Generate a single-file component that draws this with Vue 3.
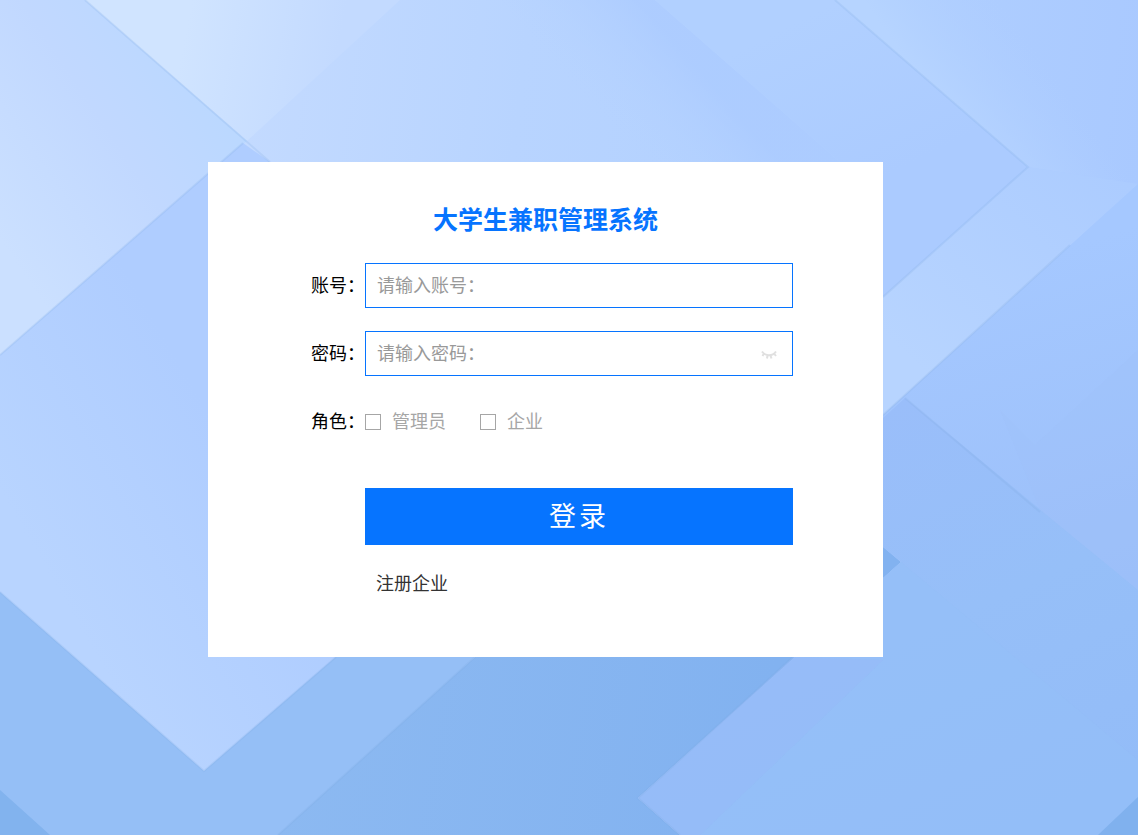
<script setup>
import { ref } from 'vue'

const account = ref('')
const password = ref('')
const showPassword = ref(false)
const role = ref('')
const roles = ['管理员', '企业']
</script>

<template>
  <main class="page">
    <svg class="backdrop" viewBox="0 0 1138 835" preserveAspectRatio="xMidYMid slice" aria-hidden="true">
      <defs>
        <linearGradient id="sky" gradientUnits="userSpaceOnUse" x1="250" y1="100" x2="1138" y2="200">
          <stop offset="0" stop-color="#c3daff" />
          <stop offset="0.3" stop-color="#b8d4ff" />
          <stop offset="0.65" stop-color="#b1d0ff" />
          <stop offset="1" stop-color="#a9c9ff" />
        </linearGradient>
        <linearGradient id="glow" gradientUnits="userSpaceOnUse" x1="180" y1="60" x2="330" y2="90">
          <stop offset="0" stop-color="#d0e4ff" />
          <stop offset="1" stop-color="#c3daff" />
        </linearGradient>
        <linearGradient id="left" gradientUnits="userSpaceOnUse" x1="0" y1="240" x2="210" y2="100">
          <stop offset="0" stop-color="#cbe0ff" />
          <stop offset="0.6" stop-color="#c1d8ff" />
          <stop offset="1" stop-color="#bbd8ff" />
        </linearGradient>
        <linearGradient id="mid" gradientUnits="userSpaceOnUse" x1="40" y1="560" x2="230" y2="450">
          <stop offset="0" stop-color="#b8d4ff" />
          <stop offset="1" stop-color="#afcdff" />
        </linearGradient>
        <linearGradient id="deep" gradientUnits="userSpaceOnUse" x1="300" y1="680" x2="760" y2="760">
          <stop offset="0" stop-color="#8cb9f1" />
          <stop offset="1" stop-color="#82b2f0" />
        </linearGradient>
        <linearGradient id="right" gradientUnits="userSpaceOnUse" x1="960" y1="280" x2="1060" y2="600">
          <stop offset="0" stop-color="#a5c8ff" />
          <stop offset="1" stop-color="#9bbff9" />
        </linearGradient>
        <linearGradient id="low" gradientUnits="userSpaceOnUse" x1="900" y1="400" x2="1080" y2="800">
          <stop offset="0" stop-color="#9abefa" />
          <stop offset="0.5" stop-color="#96bff8" />
          <stop offset="1" stop-color="#93bcf8" />
        </linearGradient>
        <linearGradient id="facet" gradientUnits="userSpaceOnUse" x1="760" y1="40" x2="840" y2="200">
          <stop offset="0" stop-color="#b1d0ff" />
          <stop offset="1" stop-color="#abcbff" />
        </linearGradient>
        <linearGradient id="band" gradientUnits="userSpaceOnUse" x1="900" y1="350" x2="1090" y2="150">
          <stop offset="0" stop-color="#b7d4ff" />
          <stop offset="1" stop-color="#acccff" />
        </linearGradient>
        <linearGradient id="dusk" gradientUnits="userSpaceOnUse" x1="690" y1="60" x2="610" y2="130">
          <stop offset="0" stop-color="#aacaff" stop-opacity="0.7" />
          <stop offset="1" stop-color="#b5d2ff" stop-opacity="0" />
        </linearGradient>
        <linearGradient id="ray" gradientUnits="userSpaceOnUse" x1="910" y1="65" x2="1000" y2="0">
          <stop offset="0" stop-color="#b6d4ff" />
          <stop offset="1" stop-color="#afceff" stop-opacity="0" />
        </linearGradient>
      </defs>
      <rect width="1138" height="835" fill="url(#sky)" />
      <path d="M85 0H400L247 141Z" fill="url(#glow)" />
      <path d="M655 0L840 162H500V0Z" fill="url(#dusk)" />
      <path d="M655 0H835L1028 167 883 297V200L840 162Z" fill="url(#facet)" />
      <path d="M835 0H1138V184L1028 167Z" fill="url(#ray)" />
      <path d="M1028 167L883 297V415L1138 184Z" fill="url(#band)" />
      <path d="M0 0H85L247 141 0 355Z" fill="url(#left)" />
      <path d="M0 355L243 143 270 162 420 300V590L204 771 0 592Z" fill="url(#mid)" />
      <path d="M0 592L204 771 420 584 480 652 290 835H0Z" fill="#95bff6" />
      <path d="M0 790L50 835H0Z" fill="#82b3ee" />
      <path d="M278 835L475 657 700 455H780L901 562 638 798 680 835Z" fill="url(#deep)" />
      <path d="M1138 184L883 415V547L901 562 638 798 680 835H1138Z" fill="url(#right)" />
      <path d="M905 398L883 418V547L901 562 638 798 680 835H1138V590Z" fill="url(#low)" />
      <path d="M901 562L883 578V660L700 835H1138V760Z" fill="#94bff8" opacity="0.5" />
      <path d="M883 660L700 835H680L638 798 793 657Z" fill="#96bbf9" opacity="0.6" />
      <path d="M1138 350L1035 445 1000 410 1040 510 1138 590Z" fill="#9ebffa" opacity="0.3" />
      <path d="M1138 797V835H1098Z" fill="#80b1ee" />
      <g class="edges">
        <path d="M85 0L270 162M0 355L243 143" />
        <path d="M0 592L204 771 336 657M475 657L278 835" />
        <path d="M835 0L1028 167 883 297M1070 245L883 415" />
        <path d="M905 398L1040 512M793 657L638 798 680 835" />
      </g>
    </svg>

    <form class="card" @submit.prevent>
      <h1>大学生兼职管理系统</h1>
      <div class="row">
        <label class="caption" for="account">账号：</label>
        <div class="field">
          <input id="account" v-model="account" type="text" placeholder="请输入账号：" />
        </div>
      </div>
      <div class="row">
        <label class="caption" for="password">密码：</label>
        <div class="field">
          <input id="password" v-model="password" :type="showPassword ? 'text' : 'password'" placeholder="请输入密码：" />
          <button class="eye" type="button" aria-label="显示密码" @click="showPassword = !showPassword">
            <svg width="16" height="10" viewBox="0 0 16 10" aria-hidden="true">
              <path d="M1 1.5C4.5 6.5 11.5 6.5 15 1.5M3 3.5L1.5 6M6.5 5.5L6 8.5M9.5 5.5L10.5 8.5M13 3.5L15 6" />
            </svg>
          </button>
        </div>
      </div>
      <div class="row" role="group" aria-labelledby="role-caption">
        <span id="role-caption" class="caption">角色：</span>
        <div class="roles">
          <label v-for="item in roles" :key="item" class="role">
            <input type="checkbox" :checked="role === item" @change="role = role === item ? '' : item" />
            <span>{{ item }}</span>
          </label>
        </div>
      </div>
      <button class="submit" type="submit">登录</button>
      <a class="register" href="#register">注册企业</a>
    </form>
  </main>
</template>

<style>
body {
  margin: 0;
}
</style>

<style scoped>
.page {
  position: relative;
  box-sizing: border-box;
  display: flex;
  align-items: center;
  justify-content: center;
  min-height: 100vh;
  padding: 0 47px 16px 0;
  font-family: 'Noto Sans CJK SC', sans-serif;
  font-size: 18px;
  line-height: 24px;
  color: #000;
}
.backdrop {
  position: absolute;
  inset: 0;
  width: 100%;
  height: 100%;
}
.edges {
  fill: none;
  stroke: #7fa9df;
  stroke-width: 2;
  opacity: 0.2;
}
.card {
  position: relative;
  box-sizing: border-box;
  display: flex;
  flex-direction: column;
  width: 100%;
  max-width: 675px;
  padding: 38px 90px 63px 103px;
  background: #fff;
}
h1 {
  margin: 0 13px 27px 0;
  font-size: 25px;
  line-height: 36px;
  font-weight: 700;
  text-align: center;
  color: #0674ff;
}
.row {
  display: flex;
  align-items: center;
  min-height: 45px;
  margin-bottom: 23px;
}
.caption {
  flex: none;
  width: 54px;
  padding-bottom: 3px;
  white-space: nowrap;
}
.field {
  position: relative;
  flex: 1;
  display: flex;
}
.field input {
  box-sizing: border-box;
  width: 100%;
  height: 45px;
  padding: 0 44px 4px 11px;
  border: 1px solid #0674ff;
  border-radius: 0;
  outline: none;
  background: #fff;
  font: inherit;
  color: #333;
}
.field input::placeholder {
  color: #999;
  opacity: 1;
}
.eye {
  position: absolute;
  top: 13px;
  right: 12px;
  display: flex;
  align-items: center;
  justify-content: center;
  width: 24px;
  height: 22px;
  padding: 0;
  border: 0;
  background: none;
  cursor: pointer;
}
.eye path {
  fill: none;
  stroke: #e0e0e0;
  stroke-width: 2;
}
.roles {
  display: flex;
  gap: 34px;
}
.role {
  display: flex;
  align-items: center;
  gap: 11px;
  color: #a6a6a6;
  cursor: pointer;
}
.role span {
  padding-bottom: 4px;
}
.role input {
  appearance: none;
  box-sizing: border-box;
  width: 16px;
  height: 16px;
  margin: 0;
  border: 1px solid #a6a6a6;
  background: #fff;
}
.role input:checked {
  border-color: #0674ff;
  background: #0674ff;
}
.submit {
  height: 57px;
  margin: 21px 0 25px 54px;
  padding: 0 0 4px;
  border: 0;
  background: #0674ff;
  font: inherit;
  font-size: 27px;
  letter-spacing: 3px;
  color: #fff;
  cursor: pointer;
}
.register {
  align-self: flex-start;
  margin-left: 65px;
  color: #333;
  text-decoration: none;
}
</style>
